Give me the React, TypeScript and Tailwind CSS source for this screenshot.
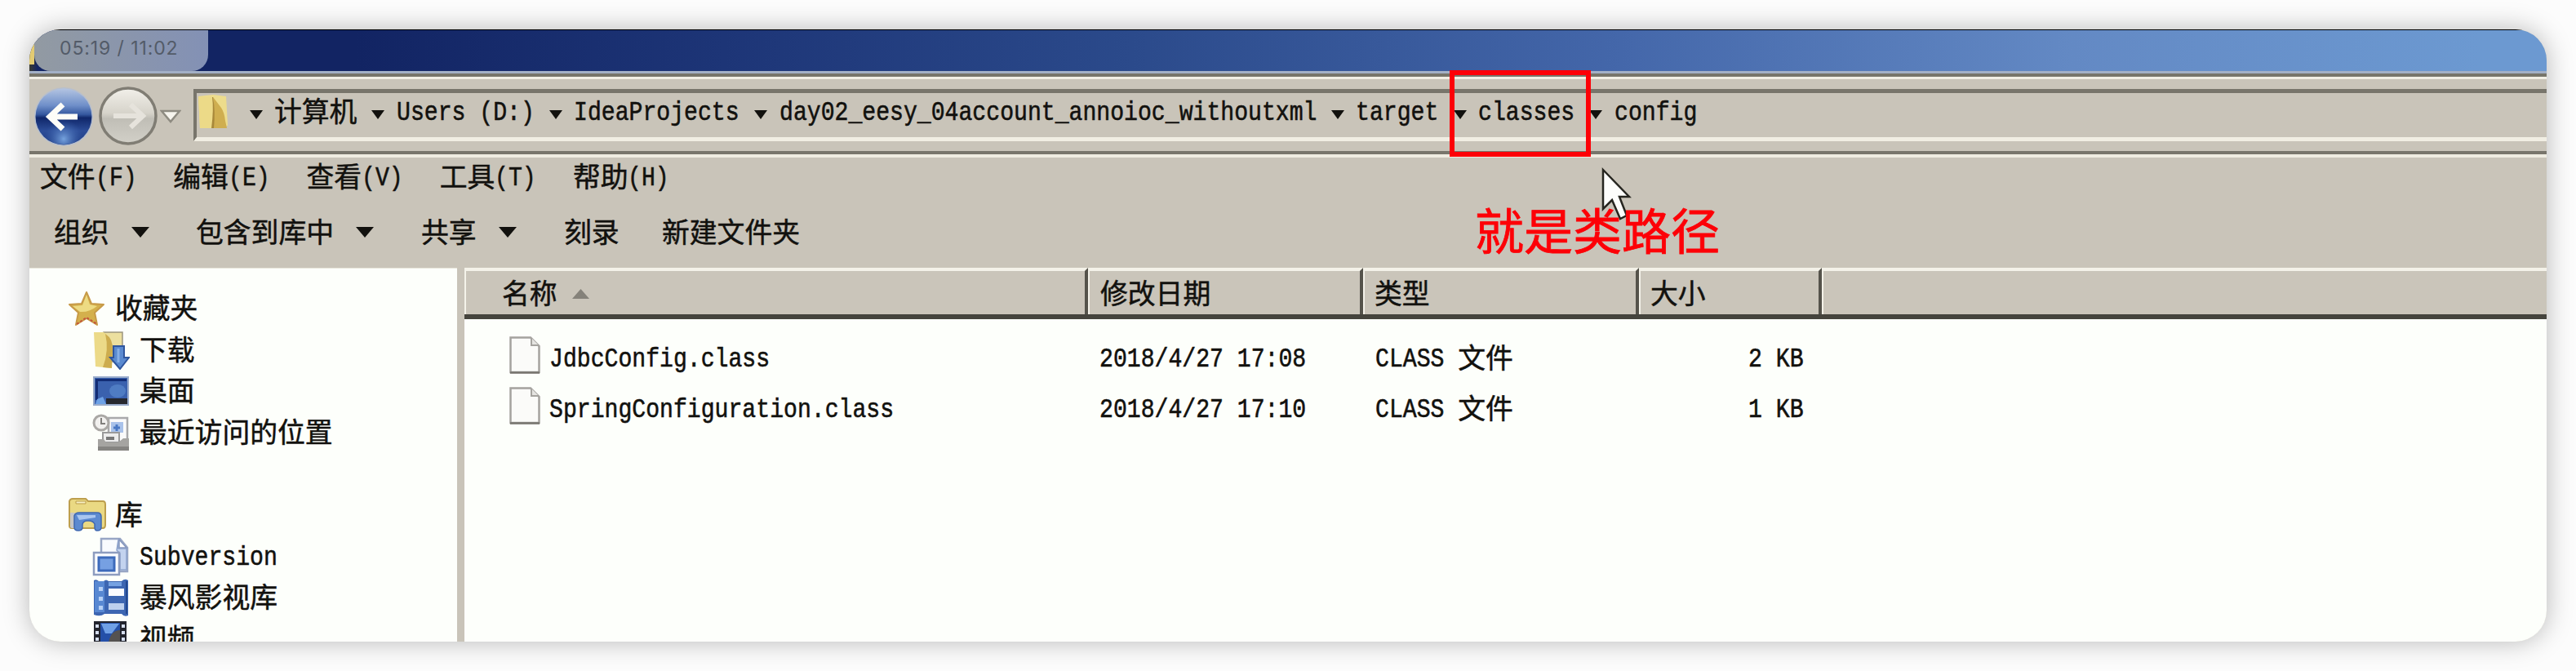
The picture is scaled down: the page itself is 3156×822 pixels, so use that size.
import { Fragment, type ReactNode } from "react";

const CELL = 16.88;

/** Text on a fixed grid: a Latin glyph takes one cell, a Chinese glyph takes two. */
function Label({ text }: { text: string }) {
  const runs = text.match(/[\x20-\x7e]+|[^\x20-\x7e]+/g) ?? [];
  return (
    <span className="flex h-[50px] shrink-0 items-center whitespace-pre leading-[50px]">
      {runs.map((run, i) =>
        run.charCodeAt(0) < 128 ? (
          <span key={i} className="block pt-[2px]" style={{ width: run.length * CELL }}>
            <span className="block w-max origin-left scale-x-[0.8275] font-['Liberation_Mono',monospace] text-[34px] [-webkit-text-stroke:0.6px_#12110e]">
              {run}
            </span>
          </span>
        ) : (
          <span key={i} className="block pb-[4px] text-[33.8px] [-webkit-text-stroke:0.5px_#12110e]">
            {run}
          </span>
        ),
      )}
    </span>
  );
}

function Triangle({ className, up = false }: { className: string; up?: boolean }) {
  return (
    <svg viewBox="0 0 16 10" preserveAspectRatio="none" className={className}>
      <path d={up ? "M8 0L16 10H0Z" : "M0 0H16L8 10Z"} fill="currentColor" />
    </svg>
  );
}

function BackButton() {
  return (
    <svg viewBox="0 0 74 76" className="h-[76px] w-[74px] shrink-0">
      <defs>
        <linearGradient id="back" x1="0" y1="0" x2="0" y2="1">
          <stop offset="0" stopColor="#b3c4e2" />
          <stop offset="0.3" stopColor="#6f8fc9" />
          <stop offset="0.46" stopColor="#35589f" />
          <stop offset="0.52" stopColor="#10276a" />
          <stop offset="0.75" stopColor="#2c4d98" />
          <stop offset="1" stopColor="#1c3a83" />
        </linearGradient>
        <radialGradient id="glow" cx="0.5" cy="0.9" r="0.35">
          <stop offset="0" stopColor="#76a3de" />
          <stop offset="1" stopColor="#3c62ad" stopOpacity="0" />
        </radialGradient>
      </defs>
      <circle cx="37" cy="38" r="36" fill="#b7bfcd" />
      <circle cx="37" cy="38" r="34.500" fill="url(#back)" />
      <circle cx="37" cy="38" r="34" fill="url(#glow)" />
      <path d="M36 23L20 38L36 53M20 38H54" fill="none" stroke="#fdfdf8" strokeWidth="7" />
    </svg>
  );
}

function ForwardButton() {
  return (
    <svg viewBox="0 0 74 76" className="h-[76px] w-[74px] shrink-0">
      <defs>
        <linearGradient id="fwd" x1="0" y1="0" x2="0" y2="1">
          <stop offset="0" stopColor="#f2f0ea" />
          <stop offset="0.45" stopColor="#d6d3ca" />
          <stop offset="0.55" stopColor="#c0beb6" />
          <stop offset="1" stopColor="#d2d0c8" />
        </linearGradient>
      </defs>
      <circle cx="37" cy="37" r="34" fill="url(#fwd)" stroke="#807d74" strokeWidth="3.500" />
      <path d="M40 23L55 37L40 51M19 37H55" fill="none" stroke="#e6e3dc" strokeWidth="6" />
    </svg>
  );
}

function FolderIcon() {
  return (
    <svg viewBox="0 0 44 46" className="h-[46px] w-[44px] shrink-0">
      <path d="M2 4L20 2L36 4L38 40L4 43Z" fill="#eddc8c" />
      <path d="M20 5Q24 10 30 18Q34 24 35 34L37 43H20Z" fill="#cfae50" />
      <path d="M2 4L20 5Q22 22 19 43H4Z" fill="#ecda88" />
      <path d="M20 5Q23 22 21 43H18Q21 20 19 5Z" fill="#a8883a" />
    </svg>
  );
}

function StarIcon() {
  return (
    <svg viewBox="0 0 46 44" className="h-[44px] w-[46px]">
      <path
        d="M23 2L29 16L44 17L33 27L36 42L23 34L10 42L13 27L2 17L17 16Z"
        fill="#d4b04c"
        stroke="#c79a48"
        strokeWidth="2"
        strokeLinejoin="round"
      />
      <path d="M23 5L27 17L36 19Q26 27 15 26L6 19L18 18Z" fill="#eddb83" />
      <path d="M11 41L23 33L36 41" fill="none" stroke="#c4543a" strokeWidth="2" strokeDasharray="3 2" />
    </svg>
  );
}

function DownloadsIcon() {
  return (
    <svg viewBox="0 0 46 48" className="h-[48px] w-[46px]">
      <path d="M14 2H37V38H14Z" fill="#ecdf9f" stroke="#9c957f" strokeWidth="1.500" />
      <path d="M2 2H14Q24 8 24 20V46L4 44Z" fill="#ecda88" />
      <path d="M16 4Q26 10 25 25L24 46L13 45Q21 24 16 4Z" fill="#cdac4e" />
      <path d="M26 19H39V33H45L34 47L22 33H26Z" fill="#5a8ad0" stroke="#2f569d" strokeWidth="2" />
      <path d="M32 22V39" stroke="#86afe6" strokeWidth="3" />
    </svg>
  );
}

function DesktopIcon() {
  return (
    <svg viewBox="0 0 46 38" className="h-[38px] w-[46px]">
      <rect x="1" y="1" width="44" height="36" fill="#9aaccb" />
      <rect x="3" y="3" width="40" height="32" fill="#3a61ae" />
      <path d="M4 4H42V7H7V30H4Z" fill="#132d75" />
      <ellipse cx="31" cy="19" rx="10" ry="8" fill="#4f7cc3" />
      <rect x="17" y="28" width="26" height="7" fill="#26282f" />
      <path d="M4 35L6 29L13 26L17 35Z" fill="#6ea2e6" />
    </svg>
  );
}

function RecentIcon() {
  return (
    <svg viewBox="0 0 46 46" className="h-[46px] w-[46px]">
      <rect x="20" y="5" width="23" height="30" fill="#fafafa" stroke="#a9a9ab" strokeWidth="2.500" />
      <rect x="23" y="10" width="15" height="13" fill="#a9c2ea" />
      <path d="M30 13V21M26 17H34" stroke="#4a78c4" strokeWidth="3" />
      <circle cx="11" cy="11" r="9" fill="#f1f0ee" stroke="#aaa8a5" strokeWidth="3" />
      <path d="M11 5V12H16" fill="none" stroke="#817f7c" strokeWidth="2" />
      <path d="M13 23H33V35H13Z" fill="#ececec" stroke="#9a9a9a" strokeWidth="2" />
      <path d="M17 28H27V32H17Z" fill="#777" />
      <path d="M7 31H14L17 35H32L38 30H45V45H7Z" fill="#a5a4a1" />
      <path d="M7 40H45V45H7Z" fill="#858481" />
    </svg>
  );
}

function LibraryIcon() {
  return (
    <svg viewBox="0 0 48 42" className="h-[42px] w-[48px]">
      <path d="M2 4Q3 1 6 1H22L25 4H43Q46 4 46 8V33Q46 37 43 37H5Q2 37 2 34Z" fill="#ead983" stroke="#bd9f4d" strokeWidth="2" />
      <path d="M10 4H22V7H10Z" fill="#f7f0c4" stroke="#bb9c47" />
      <path d="M3 18H9V37H5Q3 37 3 34Z" fill="#c8c7c5" />
      <path
        d="M8 22Q9 18 14 18H36Q41 18 41 23V36Q41 40 36 40Q33 40 33 36V32Q31 28 26 28H23Q18 29 18 33V37Q17 40 13 40Q8 40 8 36Z"
        fill="#5c8ad0"
        stroke="#3f68b0"
        strokeWidth="1.500"
      />
      <path d="M11 21H34V24L14 27Z" fill="#a9c6f0" />
    </svg>
  );
}

function SubversionIcon() {
  return (
    <svg viewBox="0 0 46 48" className="h-[48px] w-[46px]">
      <path d="M11 2H34L43 13V42H11Z" fill="#f8fafe" stroke="#98a6c4" strokeWidth="2.500" />
      <path d="M32 3V14H42V40H34V20L30 16Z" fill="#c3d3ef" stroke="#8ca2cc" strokeWidth="1.500" />
      <path d="M33 3V13H42Z" fill="#fff" stroke="#8597bf" strokeWidth="1.500" />
      <rect x="2" y="19" width="31" height="27" fill="#fbfcff" stroke="#8d9cbf" strokeWidth="2.500" />
      <rect x="8" y="25" width="19" height="16" fill="#76a0e2" stroke="#3d6abb" strokeWidth="3" />
    </svg>
  );
}

function MoviesIcon() {
  return (
    <svg viewBox="0 0 46 48" className="h-[48px] w-[46px]">
      <path d="M2 3Q5 1 8 4H14Q17 1 20 4H36Q40 0 44 3V46Q39 48 36 44H15Q10 48 2 45Z" fill="#3d66b2" />
      <path d="M3 4H15V42H3Z" fill="#5888d2" />
      <path d="M20 5H36V10H20Z" fill="#76a2e2" />
      <path d="M8 11H13V16H8ZM8 23H13V28H8ZM8 34H13V39H8Z" fill="#b5cff5" />
      <path d="M20 13H39V22H20Z" fill="#fbfcff" />
      <path d="M20 31H39V39H20Z" fill="#bdd0ee" />
      <path d="M42 4V44" stroke="#24488f" strokeWidth="2" />
    </svg>
  );
}

function VideoIcon() {
  return (
    <svg viewBox="0 0 46 48" className="h-[48px] w-[46px]">
      <rect x="2" y="2" width="40" height="46" fill="#23252e" />
      <rect x="10" y="4" width="24" height="38" fill="#2450a8" />
      <path d="M11 5H33L24 17H16Z" fill="#6fa0e6" />
      <path d="M34 13Q23 13 20 28H34Z" fill="#555250" />
      <path d="M4 6H8V10H4ZM4 14H8V18H4ZM4 22H8V26H4ZM36 6H40V10H36ZM36 14H40V18H36ZM36 22H40V26H36Z" fill="#d5deef" />
    </svg>
  );
}

function FileIcon() {
  return (
    <svg viewBox="0 0 38 46" className="h-[46px] w-[38px] shrink-0">
      <path d="M1.500 1.500H26L36.500 12V44H1.500Z" fill="#fbfbf9" stroke="#a5a39f" strokeWidth="2.500" />
      <path d="M27 2V11H36" fill="#e5e4e1" stroke="#a5a39f" strokeWidth="2" />
      <path d="M1 44.500H37" stroke="#77756f" strokeWidth="2.500" />
    </svg>
  );
}

const crumbs = [
  "计算机",
  "Users (D:)",
  "IdeaProjects",
  "day02_eesy_04account_annoioc_withoutxml",
  "target",
  "classes",
  "config",
];

const menus = ["文件(F)", "编辑(E)", "查看(V)", "工具(T)", "帮助(H)"];

const files = [
  { name: "JdbcConfig.class", date: "2018/4/27 17:08", type: "CLASS 文件", size: "2 KB" },
  { name: "SpringConfiguration.class", date: "2018/4/27 17:10", type: "CLASS 文件", size: "1 KB" },
];

function Command({ text, menu = false }: { text: string; menu?: boolean }) {
  return (
    <div className="flex items-center">
      <Label text={text} />
      {menu && <Triangle className="ml-[27px] h-[13px] w-[22px]" />}
    </div>
  );
}

function SideItem({ icon, text, child = false }: { icon: ReactNode; text: string; child?: boolean }) {
  return (
    <div className={child ? "flex h-[50.6px] shrink-0 items-center pl-[77px]" : "flex h-[50.6px] shrink-0 items-center pl-[47px]"}>
      <div className="flex w-[58px] shrink-0 items-center">{icon}</div>
      <Label text={text} />
    </div>
  );
}

function HeaderCell({ className, children }: { className: string; children?: ReactNode }) {
  return (
    <div className={`flex shrink-0 items-center border-t-4 border-l-2 border-r-4 border-t-[#f4f2e9] border-l-[#f4f2e9] border-r-[#55534b] pt-[3px] ${className}`}>
      {children}
    </div>
  );
}

export default function App() {
  return (
    <div className="h-[822px] w-[3156px] overflow-hidden bg-[#fcfcfc] p-9 font-['Noto_Sans_CJK_SC',sans-serif] text-[#12110e]">
      <div className="relative h-[750px] w-[3084px] rounded-[38px] shadow-[0_0_32px_rgba(0,0,0,0.28)]">
        <div className="flex h-full w-full flex-col overflow-hidden rounded-[38px] bg-[#c9c4b9]">
          {/* Title bar */}
          <div className="flex h-[51px] shrink-0 border-t border-black bg-[linear-gradient(90deg,#3a3a30_0px,#122463_10px,#122463_400px,#1d3577_850px,#2b4a8b_1350px,#4467aa_1950px,#6389c4_2500px,#6c99d1_3000px)]">
            <div className="h-[42px] w-[6px] bg-[#e3cb72]" />
            <div className="flex h-[50px] w-[213px] items-center rounded-b-[20px] bg-linear-to-r from-[#929aa2] to-[#8391b5] pb-[6px] pl-[31px] font-['Inter',sans-serif] text-[23px] tracking-[0.9px] text-[#535b68]">
              05:19 / 11:02
            </div>
          </div>
          <div className="h-[3px] shrink-0 bg-[#a3b0c6]" />
          <div className="h-[4px] shrink-0 bg-[#77756a]" />
          <div className="h-[3px] shrink-0 bg-[#f2efe5]" />

          {/* Navigation bar */}
          <div className="flex h-[88px] shrink-0 pl-[5px]">
            <div className="mt-[8px] flex h-[76px] w-[196px] items-center">
              <BackButton />
              <div className="ml-[5px] flex">
                <ForwardButton />
              </div>
              <svg viewBox="0 0 26 18" className="ml-[2px] h-[18px] w-[26px]">
                <path d="M2 2H24L13 15Z" fill="#f6f4ed" stroke="#8e8b81" strokeWidth="2.500" />
              </svg>
            </div>
            <div className="mt-[12px] flex h-[64px] flex-1 items-center border-t-[5px] border-b-[5px] border-l-4 border-t-[#78756b] border-b-[#f1eee3] border-l-[#78756b] pb-[8px]">
              <FolderIcon />
              <div className="flex w-[51px] shrink-0 justify-end pt-[6px] pr-[14px]">
                <Triangle className="h-[11px] w-4" />
              </div>
              {crumbs.map((crumb, i) => (
                <Fragment key={crumb}>
                  {i > 0 && (
                    <div className="flex w-[48.6px] shrink-0 items-center pt-[6px] pl-[18px]">
                      <Triangle className="h-[11px] w-4" />
                    </div>
                  )}
                  <Label text={crumb} />
                </Fragment>
              ))}
            </div>
          </div>
          <div className="h-[4px] shrink-0 bg-[#78756b]" />
          <div className="h-[4px] shrink-0 bg-[#efece1]" />

          {/* Menu and command bars */}
          <div className="flex h-[49px] shrink-0 items-center gap-[45px] pb-[2px] pl-[13px]">
            {menus.map((menu) => (
              <Label key={menu} text={menu} />
            ))}
          </div>
          <div className="mt-[16px] flex h-[53px] shrink-0 items-center pl-[30px]">
            <div className="w-[174px]"><Command text="组织" menu /></div>
            <div className="w-[276px]"><Command text="包含到库中" menu /></div>
            <div className="w-[175px]"><Command text="共享" menu /></div>
            <div className="w-[120px]"><Command text="刻录" /></div>
            <Command text="新建文件夹" />
          </div>

          <div className="mt-[17px] flex min-h-0 flex-1">
            {/* Sidebar */}
            <div className="flex w-[524px] shrink-0 flex-col overflow-hidden border-t border-[#e8e5da] bg-[#fdfffb] pt-[24px]">
              <SideItem icon={<StarIcon />} text="收藏夹" />
              <SideItem child icon={<DownloadsIcon />} text="下载" />
              <SideItem child icon={<DesktopIcon />} text="桌面" />
              <SideItem child icon={<RecentIcon />} text="最近访问的位置" />
              <div className="h-[50.6px] shrink-0" />
              <SideItem icon={<LibraryIcon />} text="库" />
              <SideItem child icon={<SubversionIcon />} text="Subversion" />
              <SideItem child icon={<MoviesIcon />} text="暴风影视库" />
              <SideItem child icon={<VideoIcon />} text="视频" />
            </div>
            <div className="w-[9px] shrink-0 bg-[#c9c4b9]" />

            {/* File list */}
            <div className="flex flex-1 flex-col bg-[#fdfffb]">
              <div className="flex h-[63px] shrink-0 border-b-[6px] border-[#45443d] bg-[#cac5ba]">
                <HeaderCell className="w-[764px] pl-[44px]">
                  <Label text="名称" />
                  <Triangle up className="ml-[18px] h-[12px] w-[21px] text-[#85827a]" />
                </HeaderCell>
                <HeaderCell className="w-[337px] pl-[13px]"><Label text="修改日期" /></HeaderCell>
                <HeaderCell className="w-[338px] pl-[12px]"><Label text="类型" /></HeaderCell>
                <HeaderCell className="w-[224px] pl-[12px]"><Label text="大小" /></HeaderCell>
                <div className="flex-1 border-t-4 border-l-2 border-[#f4f2e9]" />
              </div>
              <div className="flex flex-col pt-[13px]">
                {files.map((file) => (
                  <div key={file.name} className="flex h-[62px] items-center">
                    <div className="flex w-[778px] items-center gap-[11px] pl-[55px]">
                      <FileIcon />
                      <div className="pt-[8px]"><Label text={file.name} /></div>
                    </div>
                    <div className="w-[338px] pt-[8px]"><Label text={file.date} /></div>
                    <div className="w-[338px] pt-[8px]"><Label text={file.type} /></div>
                    <div className="flex w-[187px] justify-end pt-[8px]"><Label text={file.size} /></div>
                  </div>
                ))}
              </div>
            </div>
          </div>
        </div>

        {/* Annotations */}
        <div className="absolute top-[50px] left-[1740px] h-[106px] w-[173px] border-6 border-[#fd0007]" />
        <svg viewBox="0 0 38 66" className="absolute top-[168px] left-[1925px] h-[66px] w-[38px]">
          <path d="M3 4L35 37H23L32 60L24 64L14 41L3 52Z" fill="#fdfdfb" stroke="#26251f" strokeWidth="2.500" />
        </svg>
        <div className="absolute top-[204px] left-[1771px] text-[60px] leading-[80px] whitespace-nowrap text-[#fd0007] [-webkit-text-stroke:0.8px_#fd0007]">
          就是类路径
        </div>
      </div>
    </div>
  );
}
